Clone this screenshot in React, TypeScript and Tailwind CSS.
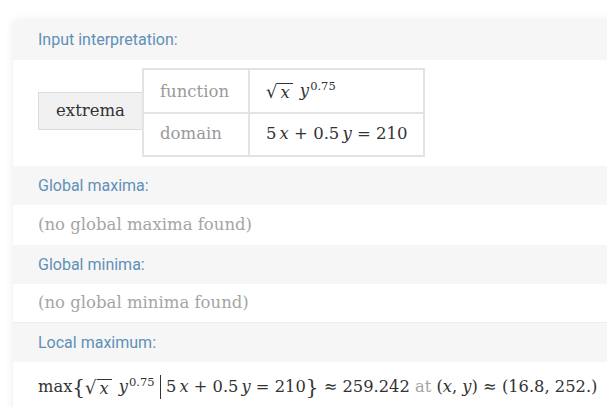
const serif = "font-['DejaVu_Serif',serif]";

function Header({ children }: { children: React.ReactNode }) {
  return (
    <div className="flex h-[39px] items-center bg-[#f6f6f6] pl-[25px] font-['Roboto',sans-serif] text-[16px] text-[#5f90b8]">
      {children}
    </div>
  );
}

function Sqrt() {
  return (
    <span className="inline-flex items-end">
      <span className="text-[18px] leading-none">√</span>
      <span className="mt-[1px] border-t border-[#333] px-[3px] italic leading-[17px]">x</span>
    </span>
  );
}

function Power() {
  return (
    <span className="ml-[7px] italic">
      y<sup className="ml-[1px] text-[11.5px] not-italic">0.75</sup>
    </span>
  );
}

export default function App() {
  return (
    <div className="h-[407px] w-[607px] overflow-hidden bg-white pl-[13px] pt-[20px]">
      <div className="w-[640px] rounded-tl-[5px] bg-white shadow-[0_0_8px_rgba(0,0,0,0.08)]">
        <div className="flex h-[40px] items-center rounded-tl-[5px] bg-[#f6f6f6] pl-[25px] font-['Roboto',sans-serif] text-[16px] text-[#5f90b8]">
          Input interpretation:
        </div>
        <div className={`flex h-[106px] items-start pl-[25px] pt-[8px] ${serif} text-[16.5px]`}>
          <div className="mt-[24px] flex h-[38px] w-[104px] items-center justify-center border border-r-0 border-[#dcdcdc] bg-[#f1f1f1] text-[#333]">
            extrema
          </div>
          <div className="grid grid-cols-[106px_173px] border-2 border-[#e3e3e3]">
            <div className="flex h-[44px] items-center border-b-2 border-r-2 border-[#e3e3e3] pl-[16px] pt-[3px] text-[#9a9a9a]">function</div>
            <div className="flex h-[44px] items-center border-b-2 border-[#e3e3e3] pl-[16px] text-[#333]">
              <Sqrt />
              <Power />
            </div>
            <div className="flex h-[41px] items-center border-r-2 border-[#e3e3e3] pl-[16px] text-[#9a9a9a]">domain</div>
            <div className="flex h-[41px] items-center pl-[16px] text-[#333]">
              5<i className="ml-[3px]">x</i>&nbsp;+ 0.5<i className="ml-[3px]">y</i>&nbsp;= 210
            </div>
          </div>
        </div>
        <Header>Global maxima:</Header>
        <div className={`flex h-[40px] items-center pl-[25px] ${serif} text-[16.5px] text-[#a5a5a5]`}>(no global maxima found)</div>
        <Header>Global minima:</Header>
        <div className={`flex h-[39px] items-center border-b border-[#eeeeee] pl-[25px] ${serif} text-[16.5px] text-[#a5a5a5]`}>(no global minima found)</div>
        <Header>Local maximum:</Header>
        <div className={`flex h-[50px] items-center whitespace-nowrap pl-[25px] ${serif} text-[16.3px] text-[#333]`}>
          max
          <span className="text-[20px] font-light">&#123;</span>
          <Sqrt />
          <Power />
          <span className="mx-[5px] h-[24px] w-[1.5px] bg-[#333]" />
          5<i className="ml-[3px]">x</i>&nbsp;+ 0.5<i className="ml-[3px]">y</i>&nbsp;= 210
          <span className="text-[20px] font-light">&#125;</span>
          &nbsp;≈ 259.242&nbsp;
          <span className="text-[#a5a5a5]">at</span>&nbsp;(<i>x</i>,&nbsp;<i>y</i>)&nbsp;≈ (16.8, 252.)
        </div>
      </div>
    </div>
  );
}
